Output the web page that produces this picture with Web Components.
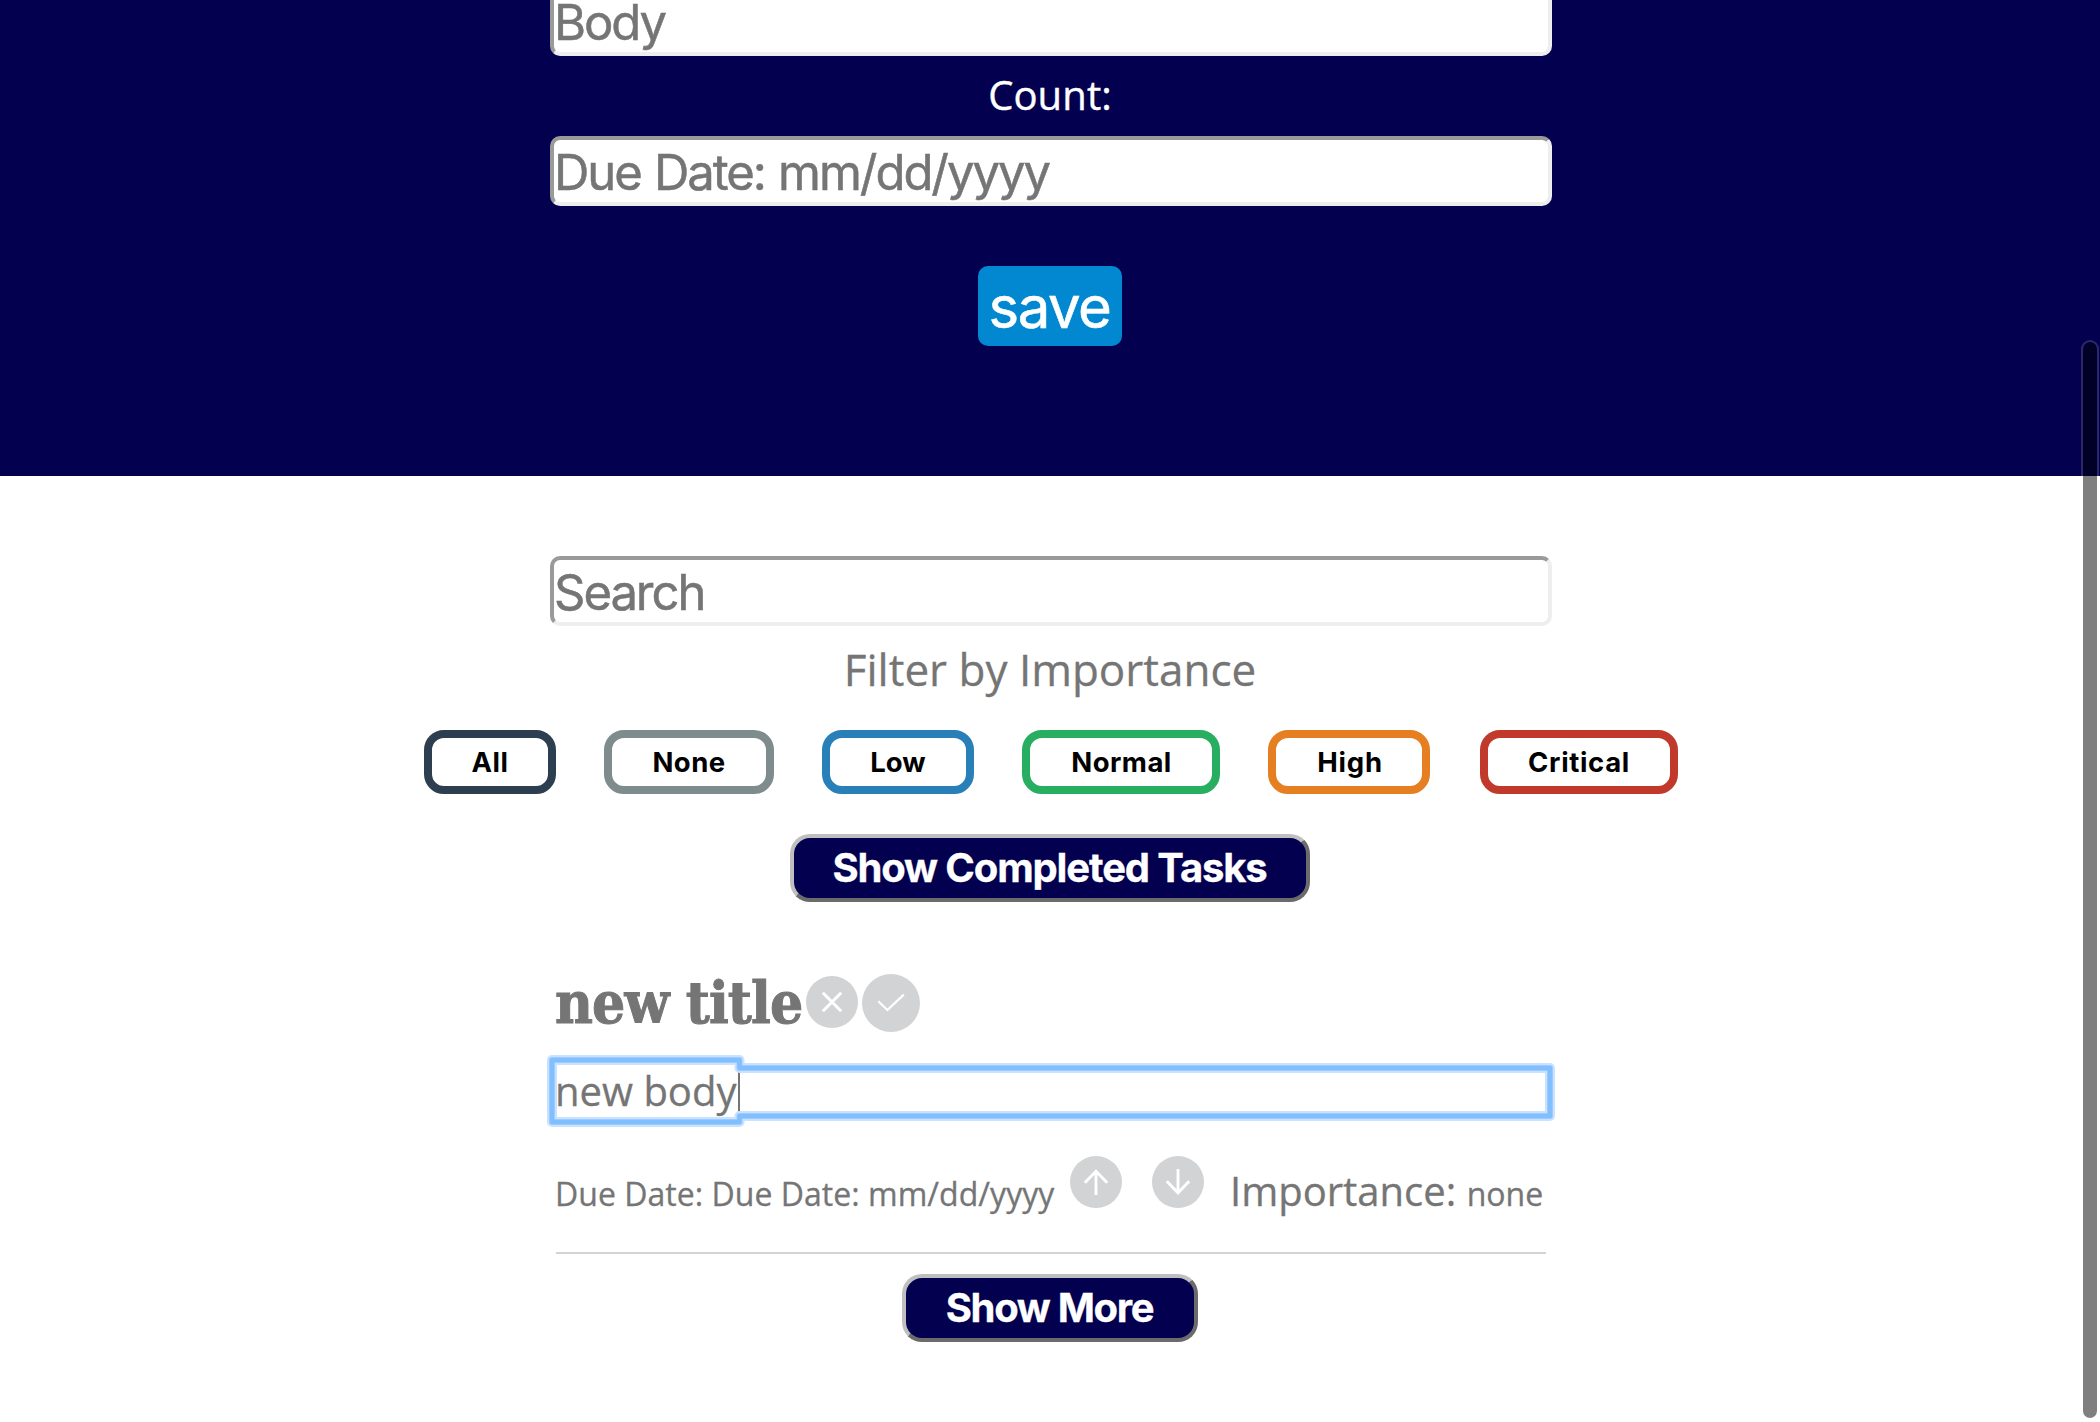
<!DOCTYPE html>
<html lang="en">
<head>
<meta charset="utf-8">
<title>To do</title>
<style>
  html, body { margin: 0; height: 100%; overflow: hidden; background: #fff; }
</style>
</head>
<body>
<todo-app></todo-app>

<script>
const define = (name, html) => {
  const template = document.createElement('template');
  template.innerHTML = html;
  customElements.define(name, class extends HTMLElement {
    constructor() {
      super();
      this.attachShadow({ mode: 'open' }).append(template.content.cloneNode(true));
    }
  });
};

define('text-field', `
  <style>
    :host {
      display: block; box-sizing: border-box; width: 1002px; height: 70px; flex: none;
      padding-top: 2px; border: 4px solid; border-color: #9a9a9a #eee #eee #9a9a9a;
      border-radius: 10px; background: #fff; color: #757575;
      font: 400 49px/62px Inter, "Liberation Sans", sans-serif;
      letter-spacing: -2.05px; word-spacing: 1.5px; white-space: nowrap;
      -webkit-text-stroke: .5px;
    }
  </style><slot></slot>`);

define('save-button', `
  <style>
    :host { display: block; }
    button {
      display: block; box-sizing: border-box; width: 144px; height: 80px; margin: 0;
      padding: 1px 1px 0 0; border: 0; border-radius: 10px; background: #0288d1; color: #fff;
      font: 400 58px/78px Inter, "Liberation Sans", sans-serif; letter-spacing: -1.4px;
      -webkit-text-stroke: .6px;
    }
  </style><button><slot></slot></button>`);

define('filter-button', `
  <style>
    :host { display: block; flex: none; width: var(--w); }
    button {
      display: block; box-sizing: border-box; width: 100%; height: 64px; margin: 0; padding: 0 0 0 var(--dx, 0);
      border: 8px solid var(--c); border-radius: 20px; background: #fff; color: #000;
      font: 700 27.5px/48px Inter, "Liberation Sans", sans-serif; letter-spacing: var(--ls, .45px);
    }
  </style><button><slot></slot></button>`);

define('wide-button', `
  <style>
    :host { display: block; width: var(--w); }
    button {
      display: block; box-sizing: border-box; width: 100%; height: 68px; margin: 0; padding: 0 1px 0 0;
      border: 4px solid; border-color: #bfbfbf #6b6b6b #6b6b6b #bfbfbf; border-radius: 20px;
      background: #03004f; color: #fff;
      font: 700 40px/60px Inter, "Liberation Sans", sans-serif; letter-spacing: var(--ls, -1.13px);
      -webkit-text-stroke: .3px;
    }
  </style><button><slot></slot></button>`);

const ICONS = {
  close: [52, '<path d="M16.8 16.8 35.2 35.2M35.2 16.8 16.8 35.2" stroke-width="3"/>'],
  check: [58, '<path d="M16.3 27.2 25.4 36 41.8 20.6" stroke-width="2.2"/>'],
  up: [52, '<path d="M26 39V14.8M14.8 26.8 26 15.3 37.2 26.8" stroke-width="2.9"/>'],
  down: [52, '<path d="M26 13V37.2M14.8 25.3 26 36.8 37.2 25.3" stroke-width="2.9"/>']
};
customElements.define('round-icon', class extends HTMLElement {
  constructor() {
    super();
    this.attachShadow({ mode: 'open' });
  }
  connectedCallback() {
    const [size, art] = ICONS[this.getAttribute('name')];
    this.shadowRoot.innerHTML = `
      <style>:host { display: block; flex: none; } svg { display: block; }</style>
      <svg width="${size}" height="${size}" viewBox="0 0 ${size} ${size}" fill="none" stroke="#fff">
        <circle cx="${size / 2}" cy="${size / 2}" r="${size / 2}" fill="#d1d3d4" stroke="none"/>${art}
      </svg>`;
  }
});

define('editable-body', `
  <style>
    :host { display: flex; position: relative; width: 996px; height: 54px; }
    .text { padding-left: 1px; font: 400 40px/54px "Open Sans", "Noto Sans", sans-serif; -webkit-text-stroke: .3px; }
    .caret { width: 2px; height: 54px; margin-left: 1.6px; background: #757575; }
    svg { position: absolute; left: -8px; top: -10px; pointer-events: none; }
  </style>
  <span class="text"><slot></slot></span><span class="caret"></span>
  <svg width="1012" height="76" viewBox="546 1054 1012 76" fill="none" stroke-linejoin="round">
    <path d="M552 1060H739.5V1068H1550V1116H739.5V1122H552Z" stroke="#c9e2ff" stroke-width="10"/>
    <path d="M552 1060H739.5V1068H1550V1116H739.5V1122H552Z" stroke="#a5d0ff" stroke-width="6"/>
    <path d="M552 1060H739.5V1068H1550V1116H739.5V1122H552Z" stroke="#82bfff" stroke-width="4.6"/>
  </svg>`);

define('todo-card', `
  <style>
    :host { display: block; width: 996px; color: #757575; }
    .title { display: flex; align-items: center; height: 58px; }
    h2 {
      margin: 0 4px 0 1px; width: 247px; white-space: nowrap; letter-spacing: -.88px;
      font: 700 58px/59px "DejaVu Serif Condensed", "DejaVu Serif", serif;
      -webkit-text-stroke: 1px;
    }
    .title round-icon:first-of-type { margin: 0 4px 2px 0; }
    editable-body { margin-top: 32px; }
    .meta {
      display: flex; box-sizing: border-box; width: 990px; height: 98px; margin: 38px 0 0 2px;
      border-bottom: 2px solid #d1d3d4; white-space: nowrap;
      font-family: "Open Sans", "Noto Sans", sans-serif; -webkit-text-stroke: .3px;
    }
    .due { width: 515px; margin-left: -1px; font-size: 32px; line-height: 76px; letter-spacing: .03px; }
    .votes { display: flex; gap: 30px; }
    .importance { margin-left: 26px; font-size: 40px; line-height: 70px; }
    .importance span { font-size: 32px; }
  </style>
  <div class="title">
    <h2>new title</h2><round-icon name="close"></round-icon><round-icon name="check"></round-icon>
  </div>
  <editable-body>new body</editable-body>
  <div class="meta">
    <div class="due">Due Date: Due Date: mm/dd/yyyy</div>
    <div class="votes"><round-icon name="up"></round-icon><round-icon name="down"></round-icon></div>
    <div class="importance">Importance: <span>none</span></div>
  </div>`);

define('page-scrollbar', `
  <style>
    :host {
      display: block; position: absolute; right: 1px; top: 340px; width: 18px; height: 1080px;
      box-sizing: border-box; border: 2px solid rgba(255,255,255,.16); border-radius: 9px;
      background: rgba(0,0,0,.5) padding-box;
    }
  </style>`);

define('todo-app', `
  <style>
    :host { display: block; position: relative; width: 2100px; height: 1422px; overflow: hidden; background: #fff; }
    header, main { display: flex; flex-direction: column; align-items: center; }
    header { height: 476px; background: #03004f; color: #fff; }
    header text-field, .search { margin-left: 2px; }
    header text-field:first-child { margin-top: -14px; }
    .count {
      height: 80px; font: 400 40px/77px "Open Sans", "Noto Sans", sans-serif; letter-spacing: .1px;
      -webkit-text-stroke: .4px;
    }
    save-button { margin-top: 60px; }
    main { padding-top: 80px; }
    .label {
      height: 104px; color: #757575; font: 400 44px/86px "Open Sans", "Noto Sans", sans-serif;
      -webkit-text-stroke: .3px;
    }
    .filters { display: flex; gap: 48px; margin-left: 2px; }
    .filters :last-child { margin-left: 2px; }
    .completed { margin-top: 40px; }
    todo-card { margin: 72px 0 20px 4px; }
  </style>
  <header>
    <text-field>Body</text-field>
    <div class="count">Count:</div>
    <text-field>Due Date: mm/dd/yyyy</text-field>
    <save-button>save</save-button>
  </header>
  <main>
    <text-field class="search">Search</text-field>
    <div class="label">Filter by Importance</div>
    <nav class="filters">
      <filter-button style="--w:132px;--c:#2c3e50">All</filter-button>
      <filter-button style="--w:170px;--c:#7f8c8d">None</filter-button>
      <filter-button style="--w:152px;--c:#2980b9;--ls:0px">Low</filter-button>
      <filter-button style="--w:198px;--c:#27ae60;--dx:1px">Normal</filter-button>
      <filter-button style="--w:162px;--c:#e67e22;--ls:.8px;--dx:2px">High</filter-button>
      <filter-button style="--w:198px;--c:#c0392b;--ls:.65px">Critical</filter-button>
    </nav>
    <wide-button class="completed" style="--w:520px">Show Completed Tasks</wide-button>
    <todo-card></todo-card>
    <wide-button style="--w:296px;--ls:-1.33px">Show More</wide-button>
  </main>
  <page-scrollbar></page-scrollbar>`);
</script>
</body>
</html>
